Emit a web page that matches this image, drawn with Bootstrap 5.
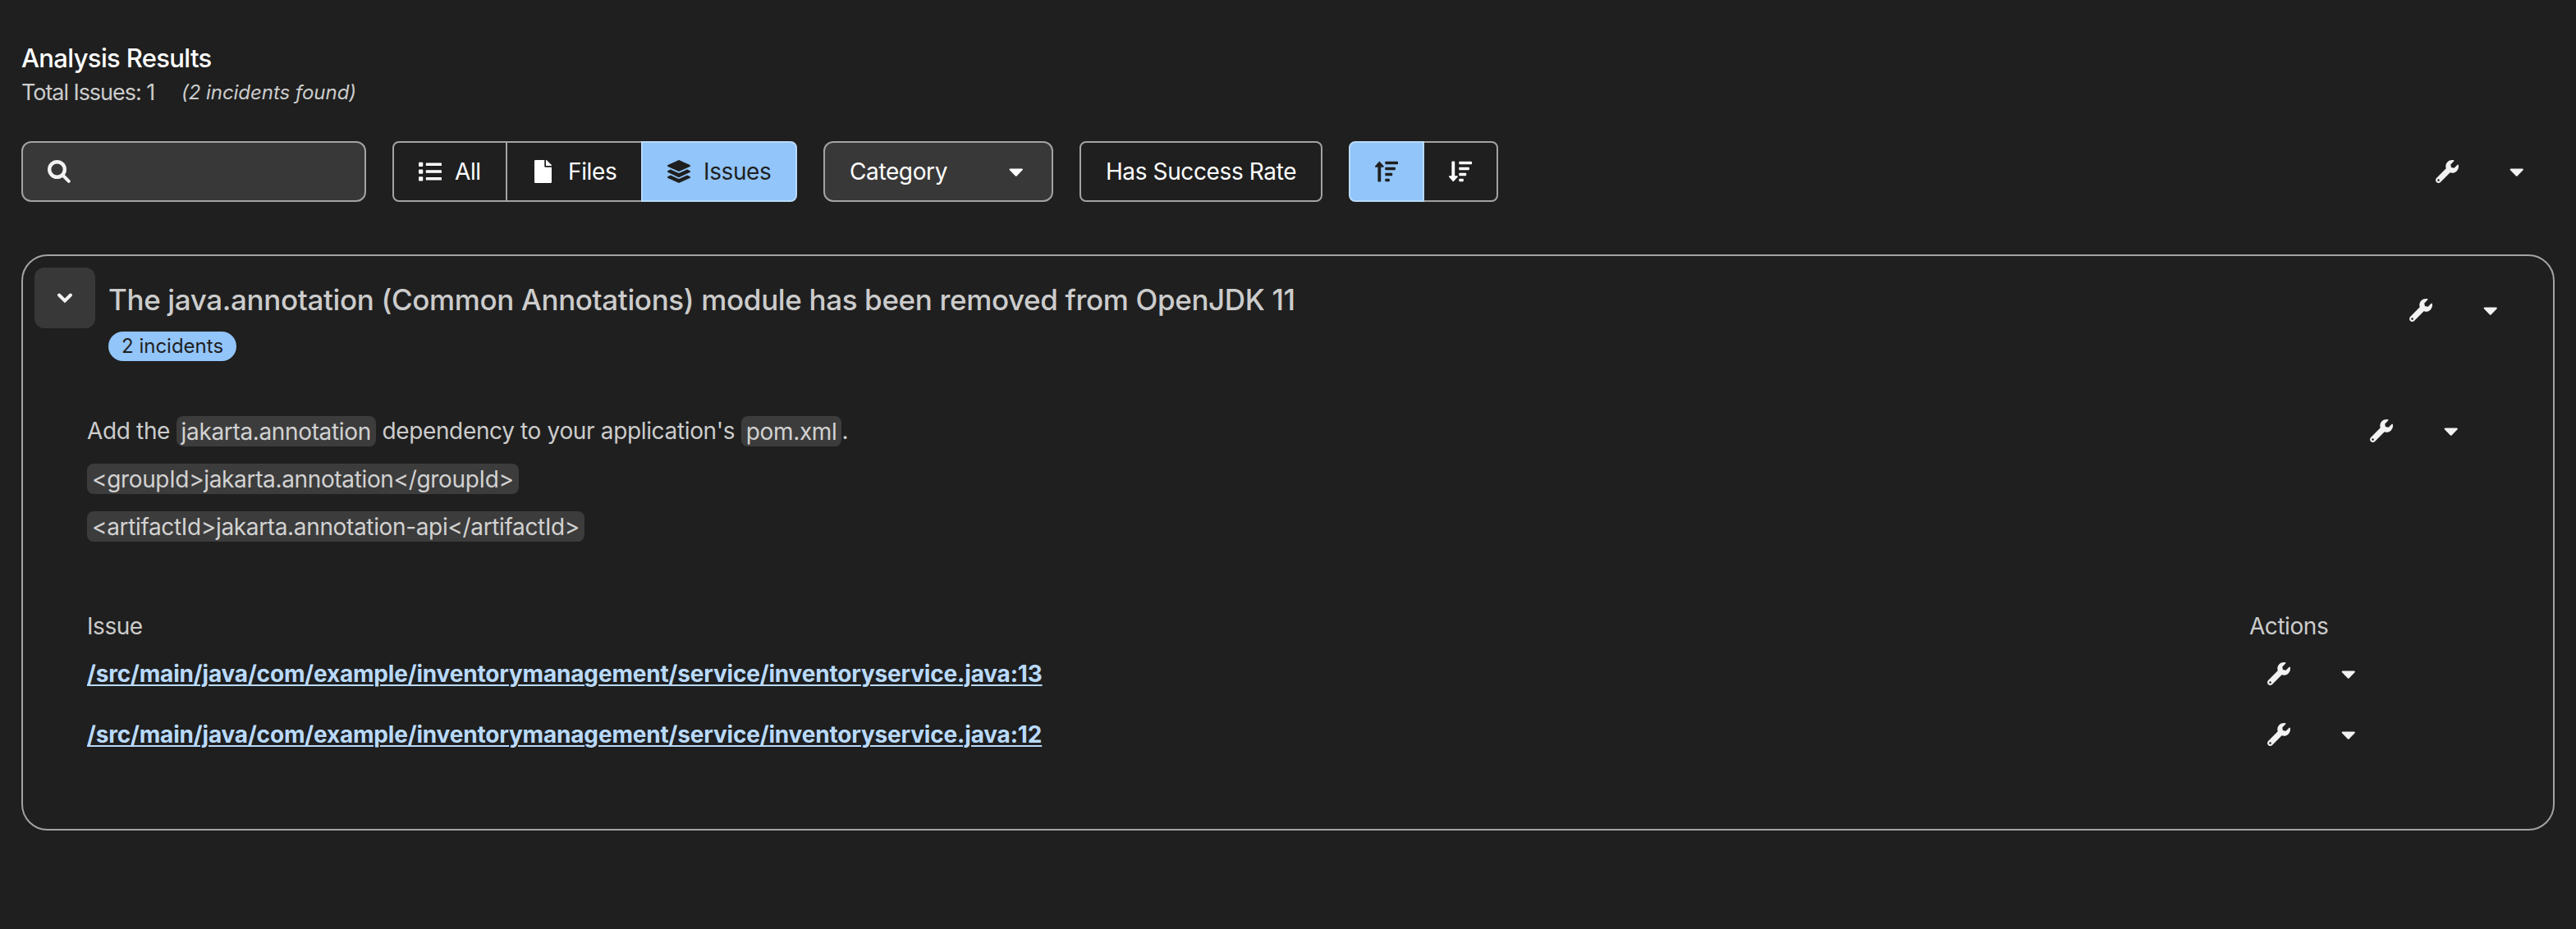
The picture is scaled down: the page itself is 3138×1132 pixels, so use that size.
<!DOCTYPE html>
<html lang="en" data-bs-theme="dark">
<head>
<meta charset="utf-8">
<title>Analysis Results</title>
<link href="https://cdn.jsdelivr.net/npm/bootstrap@5.3.0/dist/css/bootstrap.min.css" rel="stylesheet">
<style>
body{background:#1f1f1f;color:#ccc;font-family:Inter,"Liberation Sans",sans-serif;font-size:28px;line-height:42px}
.page{padding:50px 26px 0;height:1132px;overflow:hidden}
svg{fill:currentColor;display:block;flex:none}
.ic{width:28px;height:28px}
.caret-ic{width:17.5px;height:28px}
.page-title{font-size:31px;line-height:42px;font-weight:500;color:#fff;letter-spacing:-.65px;margin:0}
.totals{height:42px;line-height:42px}
.totals .cnt{font-size:27px;letter-spacing:-1.05px;width:195px}
.totals em{font-size:24px;letter-spacing:-.05px}
.toolbar{margin-top:38px;height:74px;gap:32px}
.field,.tb{height:74px;border:2px solid #a3a3a3;color:#fff;font-size:28px;line-height:42px;letter-spacing:-.38px;padding:0}
.field{background:#383838;border-radius:12px}
.search-field{width:420px;padding-left:30px;color:#f2f2f2}
.category{width:280px;padding:0 35px 0 30px}
.tb{border-radius:8px;display:flex;align-items:center}
.toolbar .btn-group>.btn.tb+.btn.tb{margin-left:-2px}
.tb.active{background:#92c5f9;border-color:#b9dafc;color:#1f1f1f}
.tb-all{width:140px;padding-left:30px}
.tb-files{width:167px;padding-left:33px}
.tb-issues{width:190px;padding-left:30px}
.tb-sort{width:92px;padding-left:30px}
.tb-rate{width:296px}
.act{gap:62px;color:#f2f2f2;width:108px}
.act-bar{margin-right:37px}
.act-card{margin:52px 67px 0 0}
.act-desc{margin:7px 115px 0 0}
.act-row{margin-right:240px}
.issue-card{margin-top:64px;height:702px;border:2px solid #a3a3a3;border-radius:32px;background:transparent;color:#ccc}
.toggle-btn{width:74px;height:74px;border-radius:12px;background:#383838;color:#f2f2f2;margin:14px 0 0 14px;padding:0}
.issue-head{margin-left:16px}
.issue-title{font-size:35px;line-height:46px;font-weight:500;letter-spacing:-.36px;margin:30px 0 16px;color:#ccc;white-space:nowrap}
.pill{background:#92c5f9;color:#1f1f1f;font-size:24px;line-height:36px;border-radius:18px;height:36px;padding:0 16px}
.desc{margin:58px 0 0 78px;letter-spacing:-.35px}
.desc p{margin:0 0 16px;height:42px}
code.snip{font-family:inherit;font-size:28px;color:#d2d2d2;background:#3c3c3c;border-radius:8px;padding:1.5px 6px}
.grid-rows{margin:64px 0 0 78px}
.grid-rows a{color:#b9dafc;font-weight:700;letter-spacing:-.18px;text-decoration:underline;text-decoration-thickness:2px;text-underline-offset:3px}
.grid-line{height:74px}
.col-head{letter-spacing:-.45px}
.actions-head{width:370px}
</style>
<script src="https://cdn.jsdelivr.net/npm/bootstrap@5.3.0/dist/js/bootstrap.bundle.min.js"></script>
</head>
<body>
<svg width="0" height="0" class="position-absolute">
<symbol id="wrench" viewBox="0 0 512 512"><path d="M507.73 109.1c-2.24-9.03-13.54-12.09-20.12-5.51l-74.36 74.36-67.88-11.31-11.31-67.88 74.36-74.36c6.62-6.62 3.43-17.9-5.66-20.16-47.38-11.74-99.55.91-136.58 37.93-39.64 39.64-50.55 97.1-34.05 147.2L18.74 402.76c-24.99 24.99-24.99 65.51 0 90.5 24.99 24.99 65.51 24.99 90.5 0l213.21-213.21c50.12 16.71 107.47 5.68 147.37-34.22 37.07-37.07 49.7-89.32 37.91-136.73zM64 472c-13.25 0-24-10.75-24-24 0-13.26 10.75-24 24-24s24 10.74 24 24c0 13.25-10.75 24-24 24z"/></symbol>
<symbol id="caret" viewBox="0 0 320 512"><path d="M31.3 192h257.3c17.8 0 26.7 21.5 14.1 34.1L174.1 354.8c-7.8 7.8-20.5 7.8-28.3 0L17.2 226.1C4.6 213.5 13.5 192 31.3 192z"/></symbol>
<symbol id="list" viewBox="0 0 512 512"><path d="M80 368H16a16 16 0 0 0-16 16v64a16 16 0 0 0 16 16h64a16 16 0 0 0 16-16v-64a16 16 0 0 0-16-16zm0-320H16A16 16 0 0 0 0 64v64a16 16 0 0 0 16 16h64a16 16 0 0 0 16-16V64a16 16 0 0 0-16-16zm0 160H16a16 16 0 0 0-16 16v64a16 16 0 0 0 16 16h64a16 16 0 0 0 16-16v-64a16 16 0 0 0-16-16zm416 176H176a16 16 0 0 0-16 16v32a16 16 0 0 0 16 16h320a16 16 0 0 0 16-16v-32a16 16 0 0 0-16-16zm0-320H176a16 16 0 0 0-16 16v32a16 16 0 0 0 16 16h320a16 16 0 0 0 16-16V80a16 16 0 0 0-16-16zm0 160H176a16 16 0 0 0-16 16v32a16 16 0 0 0 16 16h320a16 16 0 0 0 16-16v-32a16 16 0 0 0-16-16z"/></symbol>
<symbol id="file" viewBox="0 0 384 512"><path d="M224 136V0H24C10.7 0 0 10.7 0 24v464c0 13.3 10.7 24 24 24h336c13.3 0 24-10.7 24-24V160H248c-13.2 0-24-10.8-24-24zm160-14.1v6.1H256V0h6.1c6.4 0 12.5 2.5 17 7l97.9 98c4.5 4.5 7 10.6 7 16.9z"/></symbol>
<symbol id="layers" viewBox="0 0 512 512"><path d="M12.41 148.02l232.94 105.67c6.8 3.09 14.49 3.09 21.29 0l232.94-105.67c16.55-7.51 16.55-32.52 0-40.03L266.65 2.31a25.607 25.607 0 0 0-21.29 0L12.41 107.98c-16.55 7.51-16.55 32.53 0 40.04zm487.18 88.28l-58.09-26.33-161.64 73.27c-7.56 3.43-15.59 5.17-23.86 5.17s-16.29-1.74-23.86-5.17L70.51 209.97l-58.1 26.33c-16.55 7.5-16.55 32.5 0 40l232.94 105.59c6.8 3.08 14.49 3.08 21.29 0L499.59 276.3c16.55-7.5 16.55-32.5 0-40zm0 127.8l-57.87-26.23-161.86 73.37c-7.56 3.43-15.59 5.17-23.86 5.17s-16.29-1.74-23.86-5.17L70.29 337.87 12.41 364.1c-16.55 7.5-16.55 32.5 0 40l232.94 105.59c6.8 3.08 14.49 3.08 21.29 0L499.59 404.1c16.55-7.5 16.55-32.5 0-40z"/></symbol>
<symbol id="search" viewBox="0 0 28 28"><g fill="none" stroke="currentColor"><circle cx="11.500" cy="11.500" r="9.300" stroke-width="4.400"/><path d="M18.500 18.500l7.300 7.300" stroke-width="4" stroke-linecap="round"/></g></symbol>
<symbol id="bars" viewBox="0 0 28 28"><g><rect x="12.300" y="1.700" width="15.700" height="3.500" rx=".8"/><rect x="12.300" y="8.700" width="12.600" height="3.500" rx=".8"/><rect x="12.300" y="15.700" width="8.900" height="3.500" rx=".8"/><rect x="12.300" y="22.700" width="5.500" height="3.500" rx=".8"/></g></symbol>
</svg>
<main class="page">
<h1 class="page-title">Analysis Results</h1>
<div class="totals d-flex"><span class="cnt">Total Issues: 1</span><em>(2 incidents found)</em></div>

<div class="toolbar d-flex align-items-center">
<div class="field search-field d-flex align-items-center"><svg class="ic"><use href="#search"/></svg></div>
<div class="btn-group">
<button class="btn tb tb-all"><svg class="ic me-3"><use href="#list"/></svg>All</button>
<button class="btn tb tb-files"><svg width="21" height="28" class="me-3"><use href="#file"/></svg><span class="ps-1">Files</span></button>
<button class="btn tb tb-issues active"><svg class="ic me-3"><use href="#layers"/></svg>Issues</button>
</div>
<button class="btn field category d-flex align-items-center justify-content-between">Category<svg class="caret-ic"><use href="#caret"/></svg></button>
<button class="btn tb tb-rate justify-content-center">Has Success Rate</button>
<div class="btn-group">
<button class="btn tb tb-sort active"><svg class="ic"><path d="M5.300 1.400L10.800 7.500Q10.900 8.600 10 8.700H7.200V25.500Q7.200 26.400 6.300 26.400H4.300Q3.400 26.400 3.400 25.500V8.700H.6Q-.3 8.600 0 7.500z"/><use href="#bars"/></svg></button>
<button class="btn tb tb-sort"><svg class="ic"><path d="M5.300 26.600L10.800 20.500Q10.900 19.400 10 19.300H7.200V2.500Q7.200 1.600 6.300 1.600H4.300Q3.400 1.600 3.400 2.500V19.300H.6Q-.3 19.400 0 20.500z"/><use href="#bars"/></svg></button>
</div>
<div class="act act-bar d-flex ms-auto"><svg class="ic"><use href="#wrench"/></svg><svg class="caret-ic"><use href="#caret"/></svg></div>
</div>

<section class="card issue-card">
<div class="d-flex align-items-start">
<button class="btn toggle-btn d-flex align-items-center justify-content-center"><svg width="20" height="14" viewBox="0 0 20 14"><path d="M3 3.500l7 7 7-7" fill="none" stroke="currentColor" stroke-width="4" stroke-linecap="round"/></svg></button>
<div class="issue-head"><h2 class="issue-title">The java.annotation (Common Annotations) module has been removed from OpenJDK 11</h2><span class="pill d-inline-block align-top">2 incidents</span></div>
<div class="act act-card d-flex ms-auto"><svg class="ic"><use href="#wrench"/></svg><svg class="caret-ic"><use href="#caret"/></svg></div>
</div>
<div class="desc d-flex">
<div class="flex-grow-1">
<p>Add the <code class="snip">jakarta.annotation</code> dependency to your application's <code class="snip">pom.xml</code>.</p>
<p><code class="snip">&lt;groupId&gt;jakarta.annotation&lt;/groupId&gt;</code></p>
<p><code class="snip">&lt;artifactId&gt;jakarta.annotation-api&lt;/artifactId&gt;</code></p>
</div>
<div class="act act-desc d-flex"><svg class="ic"><use href="#wrench"/></svg><svg class="caret-ic"><use href="#caret"/></svg></div>
</div>
<div class="grid-rows">
<div class="col-head d-flex justify-content-between"><span>Issue</span><span class="actions-head">Actions</span></div>
<div class="grid-line d-flex justify-content-between align-items-center"><a href="#">/src/main/java/com/example/inventorymanagement/service/inventoryservice.java:13</a><span class="act act-row d-flex"><svg class="ic"><use href="#wrench"/></svg><svg class="caret-ic"><use href="#caret"/></svg></span></div>
<div class="grid-line d-flex justify-content-between align-items-center"><a href="#">/src/main/java/com/example/inventorymanagement/service/inventoryservice.java:12</a><span class="act act-row d-flex"><svg class="ic"><use href="#wrench"/></svg><svg class="caret-ic"><use href="#caret"/></svg></span></div>
</div>
</section>
</main>
</body>
</html>
